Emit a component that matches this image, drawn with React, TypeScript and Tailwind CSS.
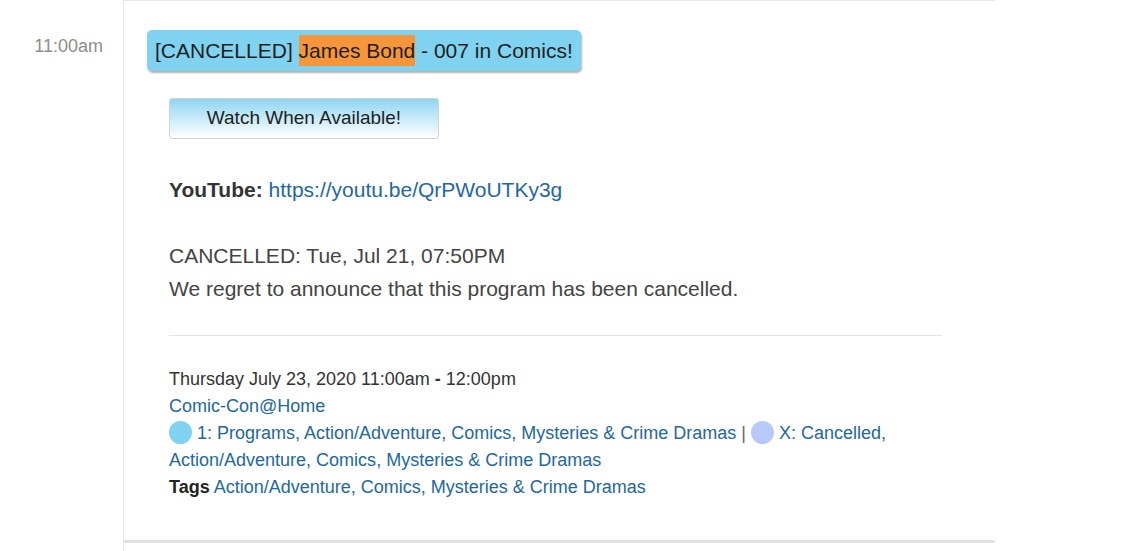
import React from 'react'

const font = { fontFamily: '"Liberation Sans", Arial, Helvetica, sans-serif' }

function Link({ children }: { children: React.ReactNode }) {
  return <a className="text-[#22679f] no-underline">{children}</a>
}

function Dot({ color }: { color: string }) {
  return (
    <span
      className={`inline-block h-[23px] w-[23px] rounded-full align-middle ${color}`}
      style={{ marginTop: -4 }}
    />
  )
}

export default function App() {
  const cats = ['Action/Adventure', 'Comics', 'Mysteries & Crime Dramas']

  return (
    <div className="flex min-h-[551px] bg-white" style={font}>
      <div className="w-[123px] shrink-0 pr-[20px] pt-[36px] text-right text-[18px] leading-[20px] text-[#8d8d8d]">
        11:00am
      </div>

      <div className="w-[872px] shrink-0 border-l border-t border-[#e6e6e6]">
        <div className="border-b-[3px] border-[#e2e2e2] pb-[39px]">
          <div className="pl-[23px] pt-[29px]">
            <div className="inline-flex h-[41px] items-center rounded-[5px] bg-[#7fd2f0] px-[8px] text-[21px] text-[#1e1e1e] shadow-[1px_2px_2px_rgba(0,0,0,0.3)]">
              <span>[CANCELLED]&nbsp;</span>
              <span className="bg-[#f7953a]">James Bond</span>
              <span>&nbsp;- 007 in Comics!</span>
            </div>
          </div>

          <div className="pl-[45px] pr-[53px]">
            <button className="mt-[27px] flex h-[41px] w-[270px] items-center justify-center rounded-[3px] border border-[#cfd3d6] bg-gradient-to-b from-[#8ed5f2] to-[#ffffff] text-[19px] text-[#1e1e1e]">
              Watch When Available!
            </button>

            <div className="mt-[34px] text-[21px] leading-[33px] text-[#333]">
              <span className="font-bold">YouTube:</span> <Link>https://youtu.be/QrPWoUTKy3g</Link>
            </div>

            <div className="mt-[33px] text-[21px] leading-[33px] text-[#444]">
              <div>CANCELLED: Tue, Jul 21, 07:50PM</div>
              <div>We regret to announce that this program has been cancelled.</div>
            </div>

            <div className="mt-[30px] h-px bg-[#e4e4e4]" />

            <div className="mt-[30px] text-[18px] leading-[27px] text-[#333]">
              <div>
                Thursday July 23, 2020 11:00am <span className="font-bold">-</span> 12:00pm
              </div>
              <div>
                <Link>Comic-Con@Home</Link>
              </div>
              <div>
                <Dot color="bg-[#7fd2f0]" /> <Link>1: Programs</Link>
                {cats.map((c) => (
                  <span key={'a' + c}>
                    <Link>, {c}</Link>
                  </span>
                ))}{' '}
                <span className="text-[#666]">|</span> <Dot color="bg-[#b7c9f8]" /> <Link>X: Cancelled</Link>
                {cats.map((c) => (
                  <span key={'b' + c}>
                    <Link>, </Link>
                    <Link>{c}</Link>
                  </span>
                ))}
              </div>
              <div>
                <span className="font-bold text-[#222]">Tags</span>{' '}
                {cats.map((c, i) => (
                  <span key={'t' + c}>
                    <Link>{c}</Link>
                    {i < cats.length - 1 ? <Link>, </Link> : null}
                  </span>
                ))}
              </div>
            </div>
          </div>
        </div>
      </div>
    </div>
  )
}
